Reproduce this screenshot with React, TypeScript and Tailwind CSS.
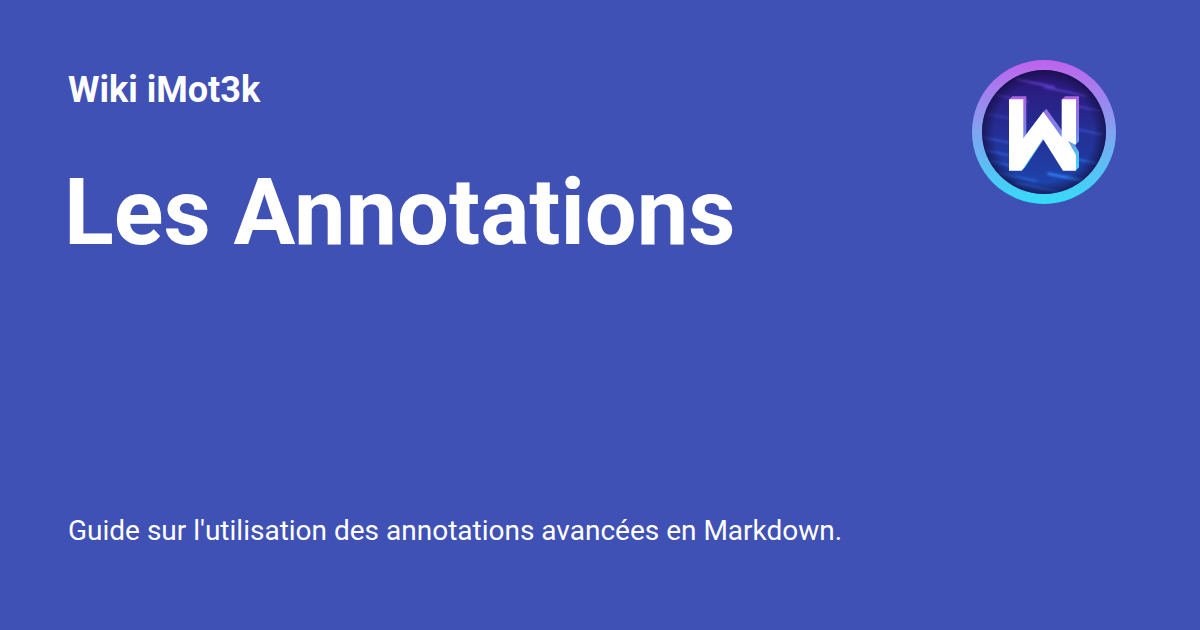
const streaks = [
  { y: 18, x: 44, w: 40, h: 2, o: 0.8, c: "#6a48d8" },
  { y: 26, x: 72, w: 44, h: 2, o: 0.7, c: "#6a48d8" },
  { y: 34, x: 24, w: 34, h: 2, o: 0.6, c: "#5a40c8" },
  { y: 44, x: 100, w: 30, h: 2, o: 0.6, c: "#5a48d0" },
  { y: 52, x: 12, w: 30, h: 2, o: 0.5, c: "#4a48c8" },
  { y: 68, x: 104, w: 28, h: 2, o: 0.7, c: "#3f58d8" },
  { y: 76, x: 10, w: 28, h: 2, o: 0.7, c: "#3a5cd8" },
  { y: 88, x: 8, w: 30, h: 2, o: 0.7, c: "#3468e0" },
  { y: 98, x: 8, w: 34, h: 2, o: 0.7, c: "#3070e8" },
  { y: 98, x: 104, w: 28, h: 2, o: 0.8, c: "#3070e8" },
  { y: 112, x: 26, w: 40, h: 2, o: 0.7, c: "#2f78f0" },
  { y: 112, x: 76, w: 46, h: 3, o: 0.9, c: "#2f80f4" },
  { y: 122, x: 44, w: 50, h: 2, o: 0.8, c: "#2f78f0" },
];

const W_PATH =
  "M37 39.3H51.3V78.3L71.3 51.7L89.7 77.3V39.3H104V85L96 81L104 95V110.7H91L71 79L49.7 110.7H37Z";

function Logo() {
  return (
    <svg width="144" height="144" viewBox="0 0 144 144" className="shrink-0">
      <defs>
        <linearGradient id="ring" x1="0" y1="0" x2="0" y2="1">
          <stop offset="0" stopColor="#c062ec" />
          <stop offset="0.5" stopColor="#80a4f0" />
          <stop offset="1" stopColor="#34dcf8" />
        </linearGradient>
        <linearGradient id="disc" x1="0" y1="0" x2="0" y2="1">
          <stop offset="0" stopColor="#2e1478" />
          <stop offset="0.45" stopColor="#252c92" />
          <stop offset="1" stopColor="#1c48b0" />
        </linearGradient>
        <radialGradient id="rim" cx="0.5" cy="0.5" r="0.5">
          <stop offset="0.8" stopColor="#140f40" stopOpacity="0" />
          <stop offset="1" stopColor="#140f40" stopOpacity="0.7" />
        </radialGradient>
        <linearGradient id="edge" gradientUnits="userSpaceOnUse" x1="0" y1="36" x2="0" y2="112">
          <stop offset="0" stopColor="#b45ee0" />
          <stop offset="0.5" stopColor="#7a84e8" />
          <stop offset="1" stopColor="#3edcf6" />
        </linearGradient>
        <filter id="soft" x="-20%" y="-100%" width="140%" height="300%">
          <feGaussianBlur stdDeviation="0.8" />
        </filter>
        <clipPath id="discClip">
          <circle cx="72" cy="72" r="62" />
        </clipPath>
      </defs>
      <circle cx="72" cy="72" r="72" fill="url(#ring)" />
      <circle cx="72" cy="72" r="62" fill="url(#disc)" />
      <g clipPath="url(#discClip)" filter="url(#soft)">
        {streaks.map((s) => (
          <rect
            key={`${s.x}-${s.y}`}
            x={s.x}
            y={s.y}
            width={s.w}
            height={s.h}
            fill={s.c}
            opacity={s.o}
            transform={`rotate(12 ${s.x} ${s.y})`}
          />
        ))}
      </g>
      <circle cx="72" cy="72" r="62" fill="url(#rim)" />
      <path d={W_PATH} fill="url(#edge)" transform="translate(1 -1)" />
      <path d={W_PATH} fill="url(#edge)" transform="translate(2 -2)" />
      <path d={W_PATH} fill="url(#edge)" transform="translate(3 -3)" />
      <path d={W_PATH} fill="#ffffff" />
    </svg>
  );
}

export default function App() {
  return (
    <div className="w-[1200px] h-[630px] overflow-hidden bg-[#3f51b5] text-white font-['Roboto',sans-serif] flex flex-col justify-between pl-[68px] pr-[84px] pt-[60px] pb-[82px]">
      <div className="flex justify-between items-start">
        <div className="flex flex-col">
          <div className="text-[36px] leading-[60px] font-bold">Wiki iMot3k</div>
          <h1 className="mt-[38px] text-[92px] leading-[110px] font-bold -ml-[4px]">Les Annotations</h1>
        </div>
        <Logo />
      </div>
      <p className="text-[28px] leading-[34px]">Guide sur l'utilisation des annotations avancées en Markdown.</p>
    </div>
  );
}
